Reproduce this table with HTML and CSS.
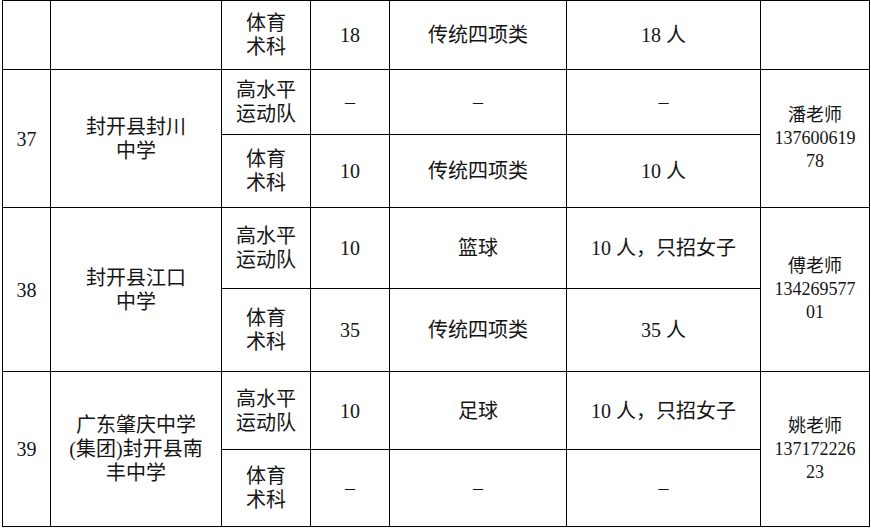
FILE: index.html
```html
<!DOCTYPE html>
<html lang="zh-CN">
<head>
<meta charset="utf-8">
<title>招生表</title>
<link rel="stylesheet" href="styles.css">
</head>
<body>
<div class="table">
  <!-- row 36 continuation -->
  <div class="cell"></div>
  <div class="cell"></div>
  <div class="cell">体育<br>术科</div>
  <div class="cell">18</div>
  <div class="cell">传统四项类</div>
  <div class="cell">18 人</div>
  <div class="cell"></div>

  <!-- 37 -->
  <div class="cell span2">37</div>
  <div class="cell span2">封开县封川<br>中学</div>
  <div class="cell">高水平<br>运动队</div>
  <div class="cell">–</div>
  <div class="cell">–</div>
  <div class="cell">–</div>
  <div class="cell span2 contact">潘老师<br>137600619<br>78</div>
  <div class="cell">体育<br>术科</div>
  <div class="cell">10</div>
  <div class="cell">传统四项类</div>
  <div class="cell">10 人</div>

  <!-- 38 -->
  <div class="cell span2">38</div>
  <div class="cell span2">封开县江口<br>中学</div>
  <div class="cell">高水平<br>运动队</div>
  <div class="cell">10</div>
  <div class="cell">篮球</div>
  <div class="cell">10 人，只招女子</div>
  <div class="cell span2 contact">傅老师<br>134269577<br>01</div>
  <div class="cell">体育<br>术科</div>
  <div class="cell">35</div>
  <div class="cell">传统四项类</div>
  <div class="cell">35 人</div>

  <!-- 39 -->
  <div class="cell span2">39</div>
  <div class="cell span2">广东肇庆中学<br>(集团)封开县南<br>丰中学</div>
  <div class="cell">高水平<br>运动队</div>
  <div class="cell">10</div>
  <div class="cell">足球</div>
  <div class="cell">10 人，只招女子</div>
  <div class="cell span2 contact">姚老师<br>137172226<br>23</div>
  <div class="cell">体育<br>术科</div>
  <div class="cell">–</div>
  <div class="cell">–</div>
  <div class="cell">–</div>
</div>
</body>
</html>
```
FILE: styles.css
```css
html, body {
  margin: 0;
  padding: 0;
  background: #fff;
}

.table {
  margin-left: 2px;
  display: grid;
  width: max-content;
  grid-template-columns: 47px 170px 88px 78px 176px 193px 108px;
  grid-template-rows: 68px 64px 72px 80px 82px 77px 76px;
  gap: 1px;
  padding: 1px;
  background: #000;
  font-family: "Liberation Serif", "Noto Sans CJK SC", serif;
  font-size: 20px;
  line-height: 24px;
  color: #151515;
}

.cell {
  background: #fff;
  display: flex;
  align-items: center;
  justify-content: center;
  text-align: center;
}

.span2 {
  grid-row: span 2;
}

.contact {
  font-size: 18px;
  line-height: 23px;
}
```
